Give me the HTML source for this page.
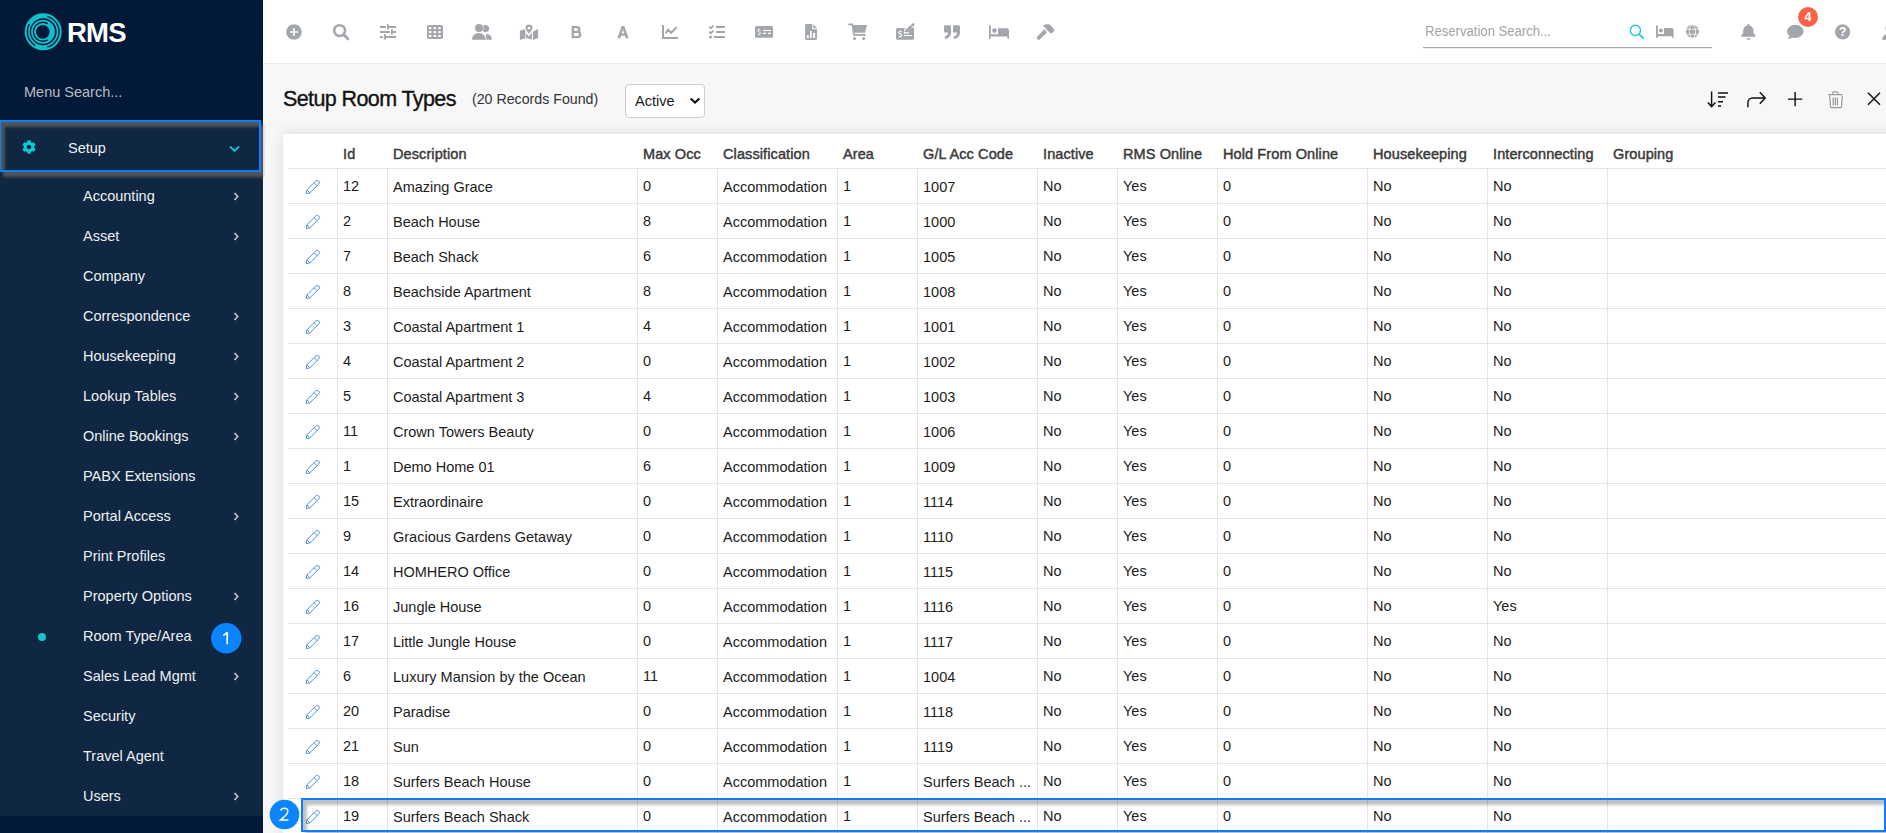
<!DOCTYPE html><html><head><meta charset="utf-8"><style>
*{margin:0;padding:0;box-sizing:border-box}
html,body{width:1886px;height:833px;overflow:hidden;background:#f7f7f8;font-family:"Liberation Sans",sans-serif}
.a{position:absolute}
.t{position:absolute;white-space:nowrap;line-height:1}
#sb{left:0;top:0;width:263px;height:833px;background:#021a38}
#sub{left:0;top:120px;width:263px;height:696px;background:#0f2742}
.mi{color:#eef0f3;font-size:14.5px}
.chev{position:absolute;left:234px;width:5px;height:7px}
#top{left:263px;top:0;width:1623px;height:64px;background:#fff;border-bottom:1px solid #ebebef}
#card{left:283px;top:134px;width:1640px;height:760px;background:#fff;box-shadow:0 0 12px rgba(30,10,50,.13)}
.hl{position:absolute;left:288px;width:1598px;height:1px;background:#e9e3e4}
.vl{position:absolute;width:1px;background:#e9e3e4}
.th{font-size:14.5px;letter-spacing:0.1px;color:#3a3a3a;-webkit-text-stroke:0.45px #3a3a3a}
.td{font-size:14.5px;color:#1c1c1c}
.badge{position:absolute;border-radius:50%;background:#0a84ff;color:#fff;text-align:center;font-size:17px}
</style></head><body>
<div id="sb" class="a"></div><div id="sub" class="a"></div>
<svg class="a" style="left:22px;top:10px" width="44" height="44" viewBox="0 0 44 44">
<g fill="none" stroke="#0fc0cd">
<circle cx="21.2" cy="21.8" r="17.5" stroke-width="2.0"/>
<circle cx="21.2" cy="21.8" r="14.3" stroke-width="1.7"/>
<circle cx="21.0" cy="21.8" r="11.1" stroke-width="1.7"/>
<circle cx="20.8" cy="21.8" r="7.8" stroke-width="1.9"/>
<path d="M7.43 13.85A15.9 15.9 0 0 1 25.32 6.44" stroke-width="3.2"/>
<path d="M25.60 13.66A9.4 9.4 0 0 1 25.60 29.94" stroke-width="3.2"/>
<path d="M25.32 37.16A15.9 15.9 0 0 1 13.25 35.57" stroke-width="3.2"/>
</g></svg>
<div class="t" style="left:67px;top:18.5px;font-size:27.5px;font-weight:bold;color:#fff;letter-spacing:-0.8px">RMS</div>
<div class="t" style="left:24px;top:84.5px;font-size:14.5px;color:#b9bcc3">Menu Search...</div>
<svg class="a" style="left:22.4px;top:140.2px" width="14" height="14" viewBox="0 0 512 512"><path fill="#0acbd5" d="M487.4 315.7l-42.6-24.6c4.3-23.2 4.3-47 0-70.2l42.6-24.6c4.9-2.8 7.1-8.6 5.5-14-11.1-35.6-30-67.8-54.7-94.6-3.8-4.1-10-5.1-14.8-2.3L380.8 110c-17.9-15.4-38.5-27.3-60.8-35.1V25.8c0-5.6-3.9-10.5-9.4-11.7-36.7-8.2-74.3-7.8-109.2 0-5.5 1.2-9.4 6.1-9.4 11.7V75c-22.2 7.9-42.8 19.8-60.8 35.1L88.7 85.5c-4.9-2.8-11-1.9-14.8 2.3-24.7 26.7-43.6 58.9-54.7 94.6-1.7 5.4.6 11.2 5.5 14L67.3 221c-4.3 23.2-4.3 47 0 70.2l-42.6 24.6c-4.9 2.8-7.1 8.6-5.5 14 11.1 35.6 30 67.8 54.7 94.6 3.8 4.1 10 5.1 14.8 2.3l42.6-24.6c17.9 15.4 38.5 27.3 60.8 35.1v49.2c0 5.6 3.9 10.5 9.4 11.7 36.7 8.2 74.3 7.8 109.2 0 5.5-1.2 9.4-6.1 9.4-11.7v-49.2c22.2-7.9 42.8-19.8 60.8-35.1l42.6 24.6c4.9 2.8 11 1.9 14.8-2.3 24.7-26.7 43.6-58.9 54.7-94.6 1.5-5.5-.7-11.3-5.6-14.1zM256 336c-44.1 0-80-35.9-80-80s35.9-80 80-80 80 35.9 80 80-35.9 80-80 80z"/></svg>
<div class="t mi" style="left:68px;top:141px">Setup</div>
<svg class="a" style="left:229px;top:145px" width="11" height="8" viewBox="0 0 11 8"><path d="M1 1.5l4.5 4.5 4.5-4.5" fill="none" stroke="#17c4cf" stroke-width="1.8"/></svg>
<div class="t mi" style="left:83px;top:189px">Accounting</div>
<svg class="a" style="left:233px;top:192px" width="7" height="9" viewBox="0 0 7 9"><path d="M1.5 1l3.2 3.5-3.2 3.5" fill="none" stroke="#c3c7ce" stroke-width="1.6"/></svg>
<div class="t mi" style="left:83px;top:229px">Asset</div>
<svg class="a" style="left:233px;top:232px" width="7" height="9" viewBox="0 0 7 9"><path d="M1.5 1l3.2 3.5-3.2 3.5" fill="none" stroke="#c3c7ce" stroke-width="1.6"/></svg>
<div class="t mi" style="left:83px;top:269px">Company</div>
<div class="t mi" style="left:83px;top:309px">Correspondence</div>
<svg class="a" style="left:233px;top:312px" width="7" height="9" viewBox="0 0 7 9"><path d="M1.5 1l3.2 3.5-3.2 3.5" fill="none" stroke="#c3c7ce" stroke-width="1.6"/></svg>
<div class="t mi" style="left:83px;top:349px">Housekeeping</div>
<svg class="a" style="left:233px;top:352px" width="7" height="9" viewBox="0 0 7 9"><path d="M1.5 1l3.2 3.5-3.2 3.5" fill="none" stroke="#c3c7ce" stroke-width="1.6"/></svg>
<div class="t mi" style="left:83px;top:389px">Lookup Tables</div>
<svg class="a" style="left:233px;top:392px" width="7" height="9" viewBox="0 0 7 9"><path d="M1.5 1l3.2 3.5-3.2 3.5" fill="none" stroke="#c3c7ce" stroke-width="1.6"/></svg>
<div class="t mi" style="left:83px;top:429px">Online Bookings</div>
<svg class="a" style="left:233px;top:432px" width="7" height="9" viewBox="0 0 7 9"><path d="M1.5 1l3.2 3.5-3.2 3.5" fill="none" stroke="#c3c7ce" stroke-width="1.6"/></svg>
<div class="t mi" style="left:83px;top:469px">PABX Extensions</div>
<div class="t mi" style="left:83px;top:509px">Portal Access</div>
<svg class="a" style="left:233px;top:512px" width="7" height="9" viewBox="0 0 7 9"><path d="M1.5 1l3.2 3.5-3.2 3.5" fill="none" stroke="#c3c7ce" stroke-width="1.6"/></svg>
<div class="t mi" style="left:83px;top:549px">Print Profiles</div>
<div class="t mi" style="left:83px;top:589px">Property Options</div>
<svg class="a" style="left:233px;top:592px" width="7" height="9" viewBox="0 0 7 9"><path d="M1.5 1l3.2 3.5-3.2 3.5" fill="none" stroke="#c3c7ce" stroke-width="1.6"/></svg>
<div class="t mi" style="left:83px;top:629px">Room Type/Area</div>
<div class="t mi" style="left:83px;top:669px">Sales Lead Mgmt</div>
<svg class="a" style="left:233px;top:672px" width="7" height="9" viewBox="0 0 7 9"><path d="M1.5 1l3.2 3.5-3.2 3.5" fill="none" stroke="#c3c7ce" stroke-width="1.6"/></svg>
<div class="t mi" style="left:83px;top:709px">Security</div>
<div class="t mi" style="left:83px;top:749px">Travel Agent</div>
<div class="t mi" style="left:83px;top:789px">Users</div>
<svg class="a" style="left:233px;top:792px" width="7" height="9" viewBox="0 0 7 9"><path d="M1.5 1l3.2 3.5-3.2 3.5" fill="none" stroke="#c3c7ce" stroke-width="1.6"/></svg>
<div class="a" style="left:38px;top:633px;width:8px;height:8px;border-radius:50%;background:#17c4cf"></div>
<div id="top" class="a"></div>
<div class="t" style="left:283px;top:89.4px;font-size:21.5px;letter-spacing:-0.6px;color:#111;-webkit-text-stroke:0.35px #111">Setup Room Types</div>
<div class="t" style="left:472px;top:92px;font-size:14.2px;color:#333">(20 Records Found)</div>
<div class="a" style="left:625px;top:84px;width:80px;height:34px;background:#fff;border:1px solid #cfcfd3;border-radius:4px"></div>
<div class="t" style="left:635px;top:94px;font-size:14.5px;color:#1a1a1a">Active</div>
<svg class="a" style="left:689px;top:96px" width="12" height="9" viewBox="0 0 12 9"><path d="M1.6 2.6l4.4 4 4.4-4" fill="none" stroke="#111" stroke-width="2"/></svg>
<div id="card" class="a"></div>
<div class="t th" style="left:343px;top:147px">Id</div>
<div class="t th" style="left:393px;top:147px">Description</div>
<div class="t th" style="left:643px;top:147px">Max Occ</div>
<div class="t th" style="left:723px;top:147px">Classification</div>
<div class="t th" style="left:843px;top:147px">Area</div>
<div class="t th" style="left:923px;top:147px">G/L Acc Code</div>
<div class="t th" style="left:1043px;top:147px">Inactive</div>
<div class="t th" style="left:1123px;top:147px">RMS Online</div>
<div class="t th" style="left:1223px;top:147px">Hold From Online</div>
<div class="t th" style="left:1373px;top:147px">Housekeeping</div>
<div class="t th" style="left:1493px;top:147px">Interconnecting</div>
<div class="t th" style="left:1613px;top:147px">Grouping</div>
<div class="hl" style="top:168px"></div>
<div class="hl" style="top:203px"></div>
<div class="hl" style="top:238px"></div>
<div class="hl" style="top:273px"></div>
<div class="hl" style="top:308px"></div>
<div class="hl" style="top:343px"></div>
<div class="hl" style="top:378px"></div>
<div class="hl" style="top:413px"></div>
<div class="hl" style="top:448px"></div>
<div class="hl" style="top:483px"></div>
<div class="hl" style="top:518px"></div>
<div class="hl" style="top:553px"></div>
<div class="hl" style="top:588px"></div>
<div class="hl" style="top:623px"></div>
<div class="hl" style="top:658px"></div>
<div class="hl" style="top:693px"></div>
<div class="hl" style="top:728px"></div>
<div class="hl" style="top:763px"></div>
<div class="hl" style="top:798px"></div>
<div class="hl" style="top:833px"></div>
<div class="vl" style="left:337px;top:168px;height:665px"></div>
<div class="vl" style="left:387px;top:168px;height:665px"></div>
<div class="vl" style="left:637px;top:168px;height:665px"></div>
<div class="vl" style="left:717px;top:168px;height:665px"></div>
<div class="vl" style="left:837px;top:168px;height:665px"></div>
<div class="vl" style="left:917px;top:168px;height:665px"></div>
<div class="vl" style="left:1037px;top:168px;height:665px"></div>
<div class="vl" style="left:1117px;top:168px;height:665px"></div>
<div class="vl" style="left:1217px;top:168px;height:665px"></div>
<div class="vl" style="left:1367px;top:168px;height:665px"></div>
<div class="vl" style="left:1487px;top:168px;height:665px"></div>
<div class="vl" style="left:1607px;top:168px;height:665px"></div>
<svg class="a" style="left:305px;top:180px" width="17" height="17" viewBox="-0.1 0.6 17.6 17.6"><path d="M1.2 14.6L1.76 10.9L11.04 1.64A2.2 2.2 0 0 1 14.16 4.76L4.88 14L1.2 14.6Z M9.27 3.41L12.39 6.53 M1.9 10.8L4.9 13.8" fill="none" stroke="#4a8fda" stroke-width="1" stroke-linejoin="round"/></svg>
<div class="t td" style="left:343px;top:179px">12</div>
<div class="t td" style="left:393px;top:180px">Amazing Grace</div>
<div class="t td" style="left:643px;top:179px">0</div>
<div class="t td" style="left:723px;top:180px">Accommodation</div>
<div class="t td" style="left:843px;top:179px">1</div>
<div class="t td" style="left:923px;top:180px">1007</div>
<div class="t td" style="left:1043px;top:179px">No</div>
<div class="t td" style="left:1123px;top:179px">Yes</div>
<div class="t td" style="left:1223px;top:179px">0</div>
<div class="t td" style="left:1373px;top:179px">No</div>
<div class="t td" style="left:1493px;top:179px">No</div>
<svg class="a" style="left:305px;top:215px" width="17" height="17" viewBox="-0.1 0.6 17.6 17.6"><path d="M1.2 14.6L1.76 10.9L11.04 1.64A2.2 2.2 0 0 1 14.16 4.76L4.88 14L1.2 14.6Z M9.27 3.41L12.39 6.53 M1.9 10.8L4.9 13.8" fill="none" stroke="#4a8fda" stroke-width="1" stroke-linejoin="round"/></svg>
<div class="t td" style="left:343px;top:214px">2</div>
<div class="t td" style="left:393px;top:215px">Beach House</div>
<div class="t td" style="left:643px;top:214px">8</div>
<div class="t td" style="left:723px;top:215px">Accommodation</div>
<div class="t td" style="left:843px;top:214px">1</div>
<div class="t td" style="left:923px;top:215px">1000</div>
<div class="t td" style="left:1043px;top:214px">No</div>
<div class="t td" style="left:1123px;top:214px">Yes</div>
<div class="t td" style="left:1223px;top:214px">0</div>
<div class="t td" style="left:1373px;top:214px">No</div>
<div class="t td" style="left:1493px;top:214px">No</div>
<svg class="a" style="left:305px;top:250px" width="17" height="17" viewBox="-0.1 0.6 17.6 17.6"><path d="M1.2 14.6L1.76 10.9L11.04 1.64A2.2 2.2 0 0 1 14.16 4.76L4.88 14L1.2 14.6Z M9.27 3.41L12.39 6.53 M1.9 10.8L4.9 13.8" fill="none" stroke="#4a8fda" stroke-width="1" stroke-linejoin="round"/></svg>
<div class="t td" style="left:343px;top:249px">7</div>
<div class="t td" style="left:393px;top:250px">Beach Shack</div>
<div class="t td" style="left:643px;top:249px">6</div>
<div class="t td" style="left:723px;top:250px">Accommodation</div>
<div class="t td" style="left:843px;top:249px">1</div>
<div class="t td" style="left:923px;top:250px">1005</div>
<div class="t td" style="left:1043px;top:249px">No</div>
<div class="t td" style="left:1123px;top:249px">Yes</div>
<div class="t td" style="left:1223px;top:249px">0</div>
<div class="t td" style="left:1373px;top:249px">No</div>
<div class="t td" style="left:1493px;top:249px">No</div>
<svg class="a" style="left:305px;top:285px" width="17" height="17" viewBox="-0.1 0.6 17.6 17.6"><path d="M1.2 14.6L1.76 10.9L11.04 1.64A2.2 2.2 0 0 1 14.16 4.76L4.88 14L1.2 14.6Z M9.27 3.41L12.39 6.53 M1.9 10.8L4.9 13.8" fill="none" stroke="#4a8fda" stroke-width="1" stroke-linejoin="round"/></svg>
<div class="t td" style="left:343px;top:284px">8</div>
<div class="t td" style="left:393px;top:285px">Beachside Apartment</div>
<div class="t td" style="left:643px;top:284px">8</div>
<div class="t td" style="left:723px;top:285px">Accommodation</div>
<div class="t td" style="left:843px;top:284px">1</div>
<div class="t td" style="left:923px;top:285px">1008</div>
<div class="t td" style="left:1043px;top:284px">No</div>
<div class="t td" style="left:1123px;top:284px">Yes</div>
<div class="t td" style="left:1223px;top:284px">0</div>
<div class="t td" style="left:1373px;top:284px">No</div>
<div class="t td" style="left:1493px;top:284px">No</div>
<svg class="a" style="left:305px;top:320px" width="17" height="17" viewBox="-0.1 0.6 17.6 17.6"><path d="M1.2 14.6L1.76 10.9L11.04 1.64A2.2 2.2 0 0 1 14.16 4.76L4.88 14L1.2 14.6Z M9.27 3.41L12.39 6.53 M1.9 10.8L4.9 13.8" fill="none" stroke="#4a8fda" stroke-width="1" stroke-linejoin="round"/></svg>
<div class="t td" style="left:343px;top:319px">3</div>
<div class="t td" style="left:393px;top:320px">Coastal Apartment 1</div>
<div class="t td" style="left:643px;top:319px">4</div>
<div class="t td" style="left:723px;top:320px">Accommodation</div>
<div class="t td" style="left:843px;top:319px">1</div>
<div class="t td" style="left:923px;top:320px">1001</div>
<div class="t td" style="left:1043px;top:319px">No</div>
<div class="t td" style="left:1123px;top:319px">Yes</div>
<div class="t td" style="left:1223px;top:319px">0</div>
<div class="t td" style="left:1373px;top:319px">No</div>
<div class="t td" style="left:1493px;top:319px">No</div>
<svg class="a" style="left:305px;top:355px" width="17" height="17" viewBox="-0.1 0.6 17.6 17.6"><path d="M1.2 14.6L1.76 10.9L11.04 1.64A2.2 2.2 0 0 1 14.16 4.76L4.88 14L1.2 14.6Z M9.27 3.41L12.39 6.53 M1.9 10.8L4.9 13.8" fill="none" stroke="#4a8fda" stroke-width="1" stroke-linejoin="round"/></svg>
<div class="t td" style="left:343px;top:354px">4</div>
<div class="t td" style="left:393px;top:355px">Coastal Apartment 2</div>
<div class="t td" style="left:643px;top:354px">0</div>
<div class="t td" style="left:723px;top:355px">Accommodation</div>
<div class="t td" style="left:843px;top:354px">1</div>
<div class="t td" style="left:923px;top:355px">1002</div>
<div class="t td" style="left:1043px;top:354px">No</div>
<div class="t td" style="left:1123px;top:354px">Yes</div>
<div class="t td" style="left:1223px;top:354px">0</div>
<div class="t td" style="left:1373px;top:354px">No</div>
<div class="t td" style="left:1493px;top:354px">No</div>
<svg class="a" style="left:305px;top:390px" width="17" height="17" viewBox="-0.1 0.6 17.6 17.6"><path d="M1.2 14.6L1.76 10.9L11.04 1.64A2.2 2.2 0 0 1 14.16 4.76L4.88 14L1.2 14.6Z M9.27 3.41L12.39 6.53 M1.9 10.8L4.9 13.8" fill="none" stroke="#4a8fda" stroke-width="1" stroke-linejoin="round"/></svg>
<div class="t td" style="left:343px;top:389px">5</div>
<div class="t td" style="left:393px;top:390px">Coastal Apartment 3</div>
<div class="t td" style="left:643px;top:389px">4</div>
<div class="t td" style="left:723px;top:390px">Accommodation</div>
<div class="t td" style="left:843px;top:389px">1</div>
<div class="t td" style="left:923px;top:390px">1003</div>
<div class="t td" style="left:1043px;top:389px">No</div>
<div class="t td" style="left:1123px;top:389px">Yes</div>
<div class="t td" style="left:1223px;top:389px">0</div>
<div class="t td" style="left:1373px;top:389px">No</div>
<div class="t td" style="left:1493px;top:389px">No</div>
<svg class="a" style="left:305px;top:425px" width="17" height="17" viewBox="-0.1 0.6 17.6 17.6"><path d="M1.2 14.6L1.76 10.9L11.04 1.64A2.2 2.2 0 0 1 14.16 4.76L4.88 14L1.2 14.6Z M9.27 3.41L12.39 6.53 M1.9 10.8L4.9 13.8" fill="none" stroke="#4a8fda" stroke-width="1" stroke-linejoin="round"/></svg>
<div class="t td" style="left:343px;top:424px">11</div>
<div class="t td" style="left:393px;top:425px">Crown Towers Beauty</div>
<div class="t td" style="left:643px;top:424px">0</div>
<div class="t td" style="left:723px;top:425px">Accommodation</div>
<div class="t td" style="left:843px;top:424px">1</div>
<div class="t td" style="left:923px;top:425px">1006</div>
<div class="t td" style="left:1043px;top:424px">No</div>
<div class="t td" style="left:1123px;top:424px">Yes</div>
<div class="t td" style="left:1223px;top:424px">0</div>
<div class="t td" style="left:1373px;top:424px">No</div>
<div class="t td" style="left:1493px;top:424px">No</div>
<svg class="a" style="left:305px;top:460px" width="17" height="17" viewBox="-0.1 0.6 17.6 17.6"><path d="M1.2 14.6L1.76 10.9L11.04 1.64A2.2 2.2 0 0 1 14.16 4.76L4.88 14L1.2 14.6Z M9.27 3.41L12.39 6.53 M1.9 10.8L4.9 13.8" fill="none" stroke="#4a8fda" stroke-width="1" stroke-linejoin="round"/></svg>
<div class="t td" style="left:343px;top:459px">1</div>
<div class="t td" style="left:393px;top:460px">Demo Home 01</div>
<div class="t td" style="left:643px;top:459px">6</div>
<div class="t td" style="left:723px;top:460px">Accommodation</div>
<div class="t td" style="left:843px;top:459px">1</div>
<div class="t td" style="left:923px;top:460px">1009</div>
<div class="t td" style="left:1043px;top:459px">No</div>
<div class="t td" style="left:1123px;top:459px">Yes</div>
<div class="t td" style="left:1223px;top:459px">0</div>
<div class="t td" style="left:1373px;top:459px">No</div>
<div class="t td" style="left:1493px;top:459px">No</div>
<svg class="a" style="left:305px;top:495px" width="17" height="17" viewBox="-0.1 0.6 17.6 17.6"><path d="M1.2 14.6L1.76 10.9L11.04 1.64A2.2 2.2 0 0 1 14.16 4.76L4.88 14L1.2 14.6Z M9.27 3.41L12.39 6.53 M1.9 10.8L4.9 13.8" fill="none" stroke="#4a8fda" stroke-width="1" stroke-linejoin="round"/></svg>
<div class="t td" style="left:343px;top:494px">15</div>
<div class="t td" style="left:393px;top:495px">Extraordinaire</div>
<div class="t td" style="left:643px;top:494px">0</div>
<div class="t td" style="left:723px;top:495px">Accommodation</div>
<div class="t td" style="left:843px;top:494px">1</div>
<div class="t td" style="left:923px;top:495px">1114</div>
<div class="t td" style="left:1043px;top:494px">No</div>
<div class="t td" style="left:1123px;top:494px">Yes</div>
<div class="t td" style="left:1223px;top:494px">0</div>
<div class="t td" style="left:1373px;top:494px">No</div>
<div class="t td" style="left:1493px;top:494px">No</div>
<svg class="a" style="left:305px;top:530px" width="17" height="17" viewBox="-0.1 0.6 17.6 17.6"><path d="M1.2 14.6L1.76 10.9L11.04 1.64A2.2 2.2 0 0 1 14.16 4.76L4.88 14L1.2 14.6Z M9.27 3.41L12.39 6.53 M1.9 10.8L4.9 13.8" fill="none" stroke="#4a8fda" stroke-width="1" stroke-linejoin="round"/></svg>
<div class="t td" style="left:343px;top:529px">9</div>
<div class="t td" style="left:393px;top:530px">Gracious Gardens Getaway</div>
<div class="t td" style="left:643px;top:529px">0</div>
<div class="t td" style="left:723px;top:530px">Accommodation</div>
<div class="t td" style="left:843px;top:529px">1</div>
<div class="t td" style="left:923px;top:530px">1110</div>
<div class="t td" style="left:1043px;top:529px">No</div>
<div class="t td" style="left:1123px;top:529px">Yes</div>
<div class="t td" style="left:1223px;top:529px">0</div>
<div class="t td" style="left:1373px;top:529px">No</div>
<div class="t td" style="left:1493px;top:529px">No</div>
<svg class="a" style="left:305px;top:565px" width="17" height="17" viewBox="-0.1 0.6 17.6 17.6"><path d="M1.2 14.6L1.76 10.9L11.04 1.64A2.2 2.2 0 0 1 14.16 4.76L4.88 14L1.2 14.6Z M9.27 3.41L12.39 6.53 M1.9 10.8L4.9 13.8" fill="none" stroke="#4a8fda" stroke-width="1" stroke-linejoin="round"/></svg>
<div class="t td" style="left:343px;top:564px">14</div>
<div class="t td" style="left:393px;top:565px">HOMHERO Office</div>
<div class="t td" style="left:643px;top:564px">0</div>
<div class="t td" style="left:723px;top:565px">Accommodation</div>
<div class="t td" style="left:843px;top:564px">1</div>
<div class="t td" style="left:923px;top:565px">1115</div>
<div class="t td" style="left:1043px;top:564px">No</div>
<div class="t td" style="left:1123px;top:564px">Yes</div>
<div class="t td" style="left:1223px;top:564px">0</div>
<div class="t td" style="left:1373px;top:564px">No</div>
<div class="t td" style="left:1493px;top:564px">No</div>
<svg class="a" style="left:305px;top:600px" width="17" height="17" viewBox="-0.1 0.6 17.6 17.6"><path d="M1.2 14.6L1.76 10.9L11.04 1.64A2.2 2.2 0 0 1 14.16 4.76L4.88 14L1.2 14.6Z M9.27 3.41L12.39 6.53 M1.9 10.8L4.9 13.8" fill="none" stroke="#4a8fda" stroke-width="1" stroke-linejoin="round"/></svg>
<div class="t td" style="left:343px;top:599px">16</div>
<div class="t td" style="left:393px;top:600px">Jungle House</div>
<div class="t td" style="left:643px;top:599px">0</div>
<div class="t td" style="left:723px;top:600px">Accommodation</div>
<div class="t td" style="left:843px;top:599px">1</div>
<div class="t td" style="left:923px;top:600px">1116</div>
<div class="t td" style="left:1043px;top:599px">No</div>
<div class="t td" style="left:1123px;top:599px">Yes</div>
<div class="t td" style="left:1223px;top:599px">0</div>
<div class="t td" style="left:1373px;top:599px">No</div>
<div class="t td" style="left:1493px;top:599px">Yes</div>
<svg class="a" style="left:305px;top:635px" width="17" height="17" viewBox="-0.1 0.6 17.6 17.6"><path d="M1.2 14.6L1.76 10.9L11.04 1.64A2.2 2.2 0 0 1 14.16 4.76L4.88 14L1.2 14.6Z M9.27 3.41L12.39 6.53 M1.9 10.8L4.9 13.8" fill="none" stroke="#4a8fda" stroke-width="1" stroke-linejoin="round"/></svg>
<div class="t td" style="left:343px;top:634px">17</div>
<div class="t td" style="left:393px;top:635px">Little Jungle House</div>
<div class="t td" style="left:643px;top:634px">0</div>
<div class="t td" style="left:723px;top:635px">Accommodation</div>
<div class="t td" style="left:843px;top:634px">1</div>
<div class="t td" style="left:923px;top:635px">1117</div>
<div class="t td" style="left:1043px;top:634px">No</div>
<div class="t td" style="left:1123px;top:634px">Yes</div>
<div class="t td" style="left:1223px;top:634px">0</div>
<div class="t td" style="left:1373px;top:634px">No</div>
<div class="t td" style="left:1493px;top:634px">No</div>
<svg class="a" style="left:305px;top:670px" width="17" height="17" viewBox="-0.1 0.6 17.6 17.6"><path d="M1.2 14.6L1.76 10.9L11.04 1.64A2.2 2.2 0 0 1 14.16 4.76L4.88 14L1.2 14.6Z M9.27 3.41L12.39 6.53 M1.9 10.8L4.9 13.8" fill="none" stroke="#4a8fda" stroke-width="1" stroke-linejoin="round"/></svg>
<div class="t td" style="left:343px;top:669px">6</div>
<div class="t td" style="left:393px;top:670px">Luxury Mansion by the Ocean</div>
<div class="t td" style="left:643px;top:669px">11</div>
<div class="t td" style="left:723px;top:670px">Accommodation</div>
<div class="t td" style="left:843px;top:669px">1</div>
<div class="t td" style="left:923px;top:670px">1004</div>
<div class="t td" style="left:1043px;top:669px">No</div>
<div class="t td" style="left:1123px;top:669px">Yes</div>
<div class="t td" style="left:1223px;top:669px">0</div>
<div class="t td" style="left:1373px;top:669px">No</div>
<div class="t td" style="left:1493px;top:669px">No</div>
<svg class="a" style="left:305px;top:705px" width="17" height="17" viewBox="-0.1 0.6 17.6 17.6"><path d="M1.2 14.6L1.76 10.9L11.04 1.64A2.2 2.2 0 0 1 14.16 4.76L4.88 14L1.2 14.6Z M9.27 3.41L12.39 6.53 M1.9 10.8L4.9 13.8" fill="none" stroke="#4a8fda" stroke-width="1" stroke-linejoin="round"/></svg>
<div class="t td" style="left:343px;top:704px">20</div>
<div class="t td" style="left:393px;top:705px">Paradise</div>
<div class="t td" style="left:643px;top:704px">0</div>
<div class="t td" style="left:723px;top:705px">Accommodation</div>
<div class="t td" style="left:843px;top:704px">1</div>
<div class="t td" style="left:923px;top:705px">1118</div>
<div class="t td" style="left:1043px;top:704px">No</div>
<div class="t td" style="left:1123px;top:704px">Yes</div>
<div class="t td" style="left:1223px;top:704px">0</div>
<div class="t td" style="left:1373px;top:704px">No</div>
<div class="t td" style="left:1493px;top:704px">No</div>
<svg class="a" style="left:305px;top:740px" width="17" height="17" viewBox="-0.1 0.6 17.6 17.6"><path d="M1.2 14.6L1.76 10.9L11.04 1.64A2.2 2.2 0 0 1 14.16 4.76L4.88 14L1.2 14.6Z M9.27 3.41L12.39 6.53 M1.9 10.8L4.9 13.8" fill="none" stroke="#4a8fda" stroke-width="1" stroke-linejoin="round"/></svg>
<div class="t td" style="left:343px;top:739px">21</div>
<div class="t td" style="left:393px;top:740px">Sun</div>
<div class="t td" style="left:643px;top:739px">0</div>
<div class="t td" style="left:723px;top:740px">Accommodation</div>
<div class="t td" style="left:843px;top:739px">1</div>
<div class="t td" style="left:923px;top:740px">1119</div>
<div class="t td" style="left:1043px;top:739px">No</div>
<div class="t td" style="left:1123px;top:739px">Yes</div>
<div class="t td" style="left:1223px;top:739px">0</div>
<div class="t td" style="left:1373px;top:739px">No</div>
<div class="t td" style="left:1493px;top:739px">No</div>
<svg class="a" style="left:305px;top:775px" width="17" height="17" viewBox="-0.1 0.6 17.6 17.6"><path d="M1.2 14.6L1.76 10.9L11.04 1.64A2.2 2.2 0 0 1 14.16 4.76L4.88 14L1.2 14.6Z M9.27 3.41L12.39 6.53 M1.9 10.8L4.9 13.8" fill="none" stroke="#4a8fda" stroke-width="1" stroke-linejoin="round"/></svg>
<div class="t td" style="left:343px;top:774px">18</div>
<div class="t td" style="left:393px;top:775px">Surfers Beach House</div>
<div class="t td" style="left:643px;top:774px">0</div>
<div class="t td" style="left:723px;top:775px">Accommodation</div>
<div class="t td" style="left:843px;top:774px">1</div>
<div class="t td" style="left:923px;top:775px">Surfers Beach ...</div>
<div class="t td" style="left:1043px;top:774px">No</div>
<div class="t td" style="left:1123px;top:774px">Yes</div>
<div class="t td" style="left:1223px;top:774px">0</div>
<div class="t td" style="left:1373px;top:774px">No</div>
<div class="t td" style="left:1493px;top:774px">No</div>
<svg class="a" style="left:305px;top:810px" width="17" height="17" viewBox="-0.1 0.6 17.6 17.6"><path d="M1.2 14.6L1.76 10.9L11.04 1.64A2.2 2.2 0 0 1 14.16 4.76L4.88 14L1.2 14.6Z M9.27 3.41L12.39 6.53 M1.9 10.8L4.9 13.8" fill="none" stroke="#4a8fda" stroke-width="1" stroke-linejoin="round"/></svg>
<div class="t td" style="left:343px;top:809px">19</div>
<div class="t td" style="left:393px;top:810px">Surfers Beach Shack</div>
<div class="t td" style="left:643px;top:809px">0</div>
<div class="t td" style="left:723px;top:810px">Accommodation</div>
<div class="t td" style="left:843px;top:809px">1</div>
<div class="t td" style="left:923px;top:810px">Surfers Beach ...</div>
<div class="t td" style="left:1043px;top:809px">No</div>
<div class="t td" style="left:1123px;top:809px">Yes</div>
<div class="t td" style="left:1223px;top:809px">0</div>
<div class="t td" style="left:1373px;top:809px">No</div>
<div class="t td" style="left:1493px;top:809px">No</div>
<svg class="a" style="left:0;top:0" width="1886" height="63" viewBox="0 0 1886 63">
<g fill="#a3a6ab" stroke="none">
<!-- plus circle -->
<circle cx="294" cy="32" r="7.8"/>
<path d="M293.2 28h1.6v3.2h3.2v1.6h-3.2v3.2h-1.6v-3.2h-3.2v-1.6h3.2z" fill="#fff"/>
<!-- search -->
<circle cx="339.6" cy="30.6" r="5.4" fill="none" stroke="#a3a6ab" stroke-width="2.6"/>
<path d="M343.5 34.5l4.3 4.3" stroke="#a3a6ab" stroke-width="3" stroke-linecap="round"/>
<!-- sliders -->
<g stroke="#a3a6ab" stroke-width="1.9" fill="none">
<path d="M380 27h5.9M389 27h7M380 32h9.8M393 32h3M380 37h2.8M386 37h10"/>
</g>
<rect x="387" y="24.3" width="1.9" height="5.2"/>
<rect x="391" y="29.3" width="1.9" height="5.2"/>
<rect x="384.1" y="34.3" width="1.9" height="5.2"/>
<!-- grid -->
<rect x="427" y="25" width="16" height="14" rx="1.8"/>
<g fill="#fff"><rect x="428.9" y="27.1" width="2.5" height="2"/><rect x="428.9" y="31.1" width="2.5" height="2"/><rect x="428.9" y="35.0" width="2.5" height="2"/><rect x="433.6" y="27.1" width="2.5" height="2"/><rect x="433.6" y="31.1" width="2.5" height="2"/><rect x="433.6" y="35.0" width="2.5" height="2"/><rect x="438.2" y="27.1" width="2.5" height="2"/><rect x="438.2" y="31.1" width="2.5" height="2"/><rect x="438.2" y="35.0" width="2.5" height="2"/></g>
<!-- users -->
<circle cx="485.6" cy="28.5" r="3.5"/>
<path d="M486.2 34.1h0.8a5 5.7 0 0 1 5 5.7h-6z"/>
<circle cx="479" cy="28.1" r="4.6" fill="#fff"/>
<circle cx="479" cy="28.1" r="4"/>
<path d="M472 39.8a7 6.7 0 0 1 14 0z" stroke="#fff" stroke-width="1.2"/>
<path d="M471.8 39.8a7.05 6.7 0 0 1 14.1 0z"/>
<!-- map -->
<path d="M519.9 30.7l5.5-1.7v9.3l-5.5 1.7z"/>
<path d="M533 31.5l5.1-2.5v8.9l-5.1 2.1z"/>
<path d="M526.2 33.2l2.7 3.6l3-4.8v7.6l-5.7-1.7z"/>
<path d="M529 23.9a4.05 4.05 0 0 1 4.05 4.05c0 2.1-2.3 4.6-4.05 6.6c-1.75-2-4.05-4.5-4.05-6.6a4.05 4.05 0 0 1 4.05-4.05z" stroke="#fff" stroke-width="1.1"/>
<circle cx="528.95" cy="28.1" r="1.3" fill="#fff"/>
<!-- B -->
<path d="M572.8 27.1h4.2a2.4 2.4 0 0 1 0 4.8h-4.2 M572.8 31.9h4.7a2.6 2.6 0 0 1 0 5.2h-4.7z M572.8 26v12.3" fill="none" stroke="#a3a6ab" stroke-width="2.4"/>
<!-- A -->
<path fill-rule="evenodd" d="M617.4 38.3L621.6 26h2.8l4.2 12.3h-2.6l-.85-2.5h-4.1l-.85 2.5z M621.75 33.5h2.5l-1.25-3.9z"/>
<!-- chart -->
<path d="M663 25v12.9h15" fill="none" stroke="#a3a6ab" stroke-width="2"/>
<path d="M666 32.8l2.3-3.3l2.7 3.5l5.1-5.2" fill="none" stroke="#a3a6ab" stroke-width="2" stroke-linecap="round" stroke-linejoin="round"/>
<!-- checklist -->
<path d="M709.2 26.6l1.8 1.6l2.6-2.7 M709.2 31.6l1.8 1.6l2.6-2.7" fill="none" stroke="#a3a6ab" stroke-width="1.7"/>
<circle cx="710.5" cy="37" r="1.5"/>
<path d="M716 27h9M716 32h9M714 37h11" fill="none" stroke="#a3a6ab" stroke-width="2"/>
<!-- money check -->
<rect x="755" y="26.1" width="18" height="11.7" rx="1.6"/>
<path d="M763 30.5h8M763 33.4h3M768 33.4h3" stroke="#fff" stroke-width="1.2"/>
<path d="M760.3 30.3c-.4-.5-1-.7-1.6-.6c-.9.2-1.2 1.1-.6 1.7c.5.5 1.6.6 2.1 1.2c.6.7.2 1.7-.8 1.8c-.6.1-1.2-.2-1.6-.7 M759 28.7v1 M759 34.2v1" fill="none" stroke="#fff" stroke-width="1"/>
<!-- file chart -->
<path d="M806.5 24h5.8v5.2h4.7v9.3a1.4 1.4 0 0 1-1.4 1.4h-9.1a1.4 1.4 0 0 1-1.4-1.4v-13.1a1.4 1.4 0 0 1 1.4-1.4z"/>
<path d="M813.3 24.3l3.8 3.9h-3.8z"/>
<g fill="#fff"><rect x="806.9" y="35.3" width="1.9" height="2.8"/><rect x="810" y="31" width="1.7" height="7.1"/><rect x="813" y="33" width="2.1" height="5.1"/></g>
<!-- cart -->
<path d="M849 24.4h3.3" stroke="#a3a6ab" stroke-width="1.6" stroke-linecap="round"/>
<path d="M851.7 24.6h1.2l.4 .4h13.7l-2 7.7h-10.8l.3 1.2h11.2v1.8h-12.6z"/>
<circle cx="854.5" cy="38.5" r="1.5"/><circle cx="863.6" cy="38.5" r="1.5"/>
<!-- check w/ pen -->
<path d="M897.5 28h8.3l-1.8 1.8v3.4h2.6l5.6-5.6h.4a1.5 1.5 0 0 1 1.4 1.5v9.2a1.5 1.5 0 0 1-1.5 1.5h-15a1.5 1.5 0 0 1-1.5-1.5v-8.8a1.5 1.5 0 0 1 1.5-1.5z"/>
<path d="M905.2 32.4l6.2-6.2" stroke="#a3a6ab" stroke-width="2.9"/>
<path d="M912.3 25.3l1-1" stroke="#a3a6ab" stroke-width="2.6" stroke-linecap="round"/>
<path d="M903.7 32.9h5.3 M904 35.5h8" stroke="#fff" stroke-width="1.1"/>
<path d="M901.6 32.3c-.4-.6-1.1-.9-1.8-.8c-1 .2-1.4 1.2-.7 1.9c.6.6 1.8.7 2.4 1.4c.7.8.2 1.9-.9 2c-.7.1-1.4-.2-1.8-.8 M900.2 30.6v1 M900.2 36.6v1" fill="none" stroke="#fff" stroke-width="1.15"/>
<!-- quote -->
<path d="M945.2 25.2h4.6a1.2 1.2 0 0 1 1.2 1.2v6.4c0 3.3-2.5 6-5.8 6h-.3v-2.6c1.7 0 3-1.2 3.2-3.6h-2.9a1.2 1.2 0 0 1-1.2-1.2v-5a1.2 1.2 0 0 1 1.2-1.2z"/>
<path d="M954.2 25.2h4.6a1.2 1.2 0 0 1 1.2 1.2v6.4c0 3.3-2.5 6-5.8 6h-.3v-2.6c1.7 0 3-1.2 3.2-3.6h-2.9a1.2 1.2 0 0 1-1.2-1.2v-5a1.2 1.2 0 0 1 1.2-1.2z"/>
<!-- bed -->
<rect x="989" y="25.2" width="1.8" height="13.6"/>
<circle cx="994.5" cy="30.6" r="2.3"/>
<path d="M998 28.3h8.6a2.4 2.4 0 0 1 2.4 2.4v8.05h-1.6v-2.25h-16.6v-2.2h7.2z"/>
<!-- hammer -->
<path d="M1038.7 37.8l6.3-6.3" stroke="#a3a6ab" stroke-width="3.9" stroke-linecap="round"/>
<path d="M1042.6 25.5c1.9-.9 4.2-1.4 6-1.2c1.3.2 2.4 1.2 3.4 2.6l2.8 3.3l-3.4 3.5l-3.5-2.7c-.9-.7-1.4-1.6-1.9-2.5c-.5-.9-1.5-1.4-3.4-3z"/>
<path d="M1044.9 29.9l2 2" stroke="#fff" stroke-width="1"/>
</g>
<!-- right side -->
<text x="1425" y="36" font-family="Liberation Sans" font-size="14" textLength="126" lengthAdjust="spacingAndGlyphs" fill="#a4a4a6">Reservation Search...</text>
<rect x="1423" y="47" width="289" height="1.2" fill="#a5a9ae"/>
<circle cx="1635.4" cy="30.4" r="5.1" fill="none" stroke="#1ecad5" stroke-width="1.5"/>
<path d="M1639.2 34.3l4 3.9" stroke="#1ecad5" stroke-width="1.7" stroke-linecap="round"/>
<g fill="#a3a6ab">
<rect x="1656" y="25.5" width="1.9" height="12.3"/>
<circle cx="1660.9" cy="30.4" r="2"/>
<path d="M1664 28h7.6a2 2 0 0 1 2 2v7.8h-1.6v-1.6h-14.1v-2.2h6.1z"/>
<circle cx="1692.4" cy="31.45" r="6.5"/>
<g stroke="#fff" stroke-width="0.8" fill="none">
<path d="M1686 29.2h12.8M1686 34.2h12.8"/>
<ellipse cx="1692.4" cy="31.45" rx="3.1" ry="6.5"/>
</g>
<!-- bell -->
<path d="M1748.5 24a1 1 0 0 1 1 1v.6c2.4.5 4 2.6 4 5v2.6l2 2.3v1.3h-14.3v-1.3l2-2.3v-2.6c0-2.4 1.6-4.5 4-5v-.6a1 1 0 0 1 1-1z"/>
<path d="M1746.3 38.2h4.4a2.2 1.6 0 0 1-4.4 0z"/>
<!-- chat -->
<ellipse cx="1795.3" cy="31.4" rx="8.2" ry="6.6"/>
<path d="M1790.5 35.5l-3.2 3.3c2 .3 4.5-.5 6-1.5z"/>
<!-- help -->
<circle cx="1842.6" cy="31.8" r="7.6"/>
<!-- person partial -->
<circle cx="1889" cy="28.5" r="3.5"/>
<path d="M1882 39.8a6 5.8 0 0 1 8-5.5v5.5z"/>
</g>
<text x="1842.6" y="36.2" font-family="Liberation Sans" font-weight="bold" font-size="12" fill="#fff" text-anchor="middle">?</text>
<circle cx="1808" cy="17" r="10" fill="#fe6145"/>
<text x="1808" y="21.3" font-family="Liberation Sans" font-weight="bold" font-size="12.5" fill="#fff" text-anchor="middle">4</text>
</svg>
<svg class="a" style="left:1690px;top:80px" width="196" height="40" viewBox="1690 80 196 40">
<g fill="none" stroke="#111" stroke-width="1.45">
<path d="M1711.6 91.5v15 M1707.8 102.6l3.8 4l3.8-4"/>
<path d="M1718 93h10M1718 97h7.5M1718 101.7h5M1718 106h3"/>
<path d="M1747.9 107.2v-4.6a4.6 4.6 0 0 1 4.6-4.6h12.3 M1759.8 92.3l5.4 5.7l-5.4 5.7"/>
<path d="M1795.1 92v14.3 M1788 99.1h14.3"/>
<path d="M1868 92.8l12 12 M1880 92.8l-12 12"/>
</g>
<g fill="none" stroke="#9b9b9b" stroke-width="1.2">
<path d="M1828.3 94.6h14 M1832.7 94.4v-1.6a1 1 0 0 1 1-1h3.2a1 1 0 0 1 1 1v1.6 M1829.6 95.5l1 11.2a1 1 0 0 0 1 1h8.8a1 1 0 0 0 1-1l1-11.2 M1833.2 97.6v8 M1835.3 97.6v8 M1837.4 97.6v8"/>
</g>
</svg>

<div class="a" style="left:0;top:110px;width:263px;height:80px;overflow:hidden"><div class="a" style="left:-1px;top:10px;width:262px;height:52px;border:2px solid #0880ff;box-shadow:4px 5px 3px rgba(90,90,90,.9), inset 4px 5px 3px rgba(90,90,90,.9)"></div></div><div class="a" style="left:263px;top:124px;width:3px;height:53px;background:linear-gradient(90deg,rgba(120,120,120,.25),rgba(120,120,120,0))"></div>
<div class="a" style="left:301px;top:798px;width:1585px;height:34px;border:2px solid #0880ff;box-shadow:4px 5px 3px rgba(90,90,90,.38), inset 4px 5px 3px rgba(90,90,90,.38)"></div>
<svg class="a" style="left:0;top:600px" width="320" height="233" viewBox="0 600 320 233"><circle cx="226.3" cy="638.3" r="15.2" fill="#0a84ff"/><path d="M227.2 644.2V632.3 M227.2 632.5l-3.9 3.1" fill="none" stroke="#fff" stroke-width="1.7"/><circle cx="284.5" cy="814.5" r="14.8" fill="#0a84ff"/><path d="M280.6 810.6c.6-1.6 2-2.4 3.6-2.4c2.2 0 3.6 1.4 3.6 3.2c0 1.7-1 3-3 4.8l-4.4 3.9h8" fill="none" stroke="#fff" stroke-width="1.5"/></svg>
</body></html>
